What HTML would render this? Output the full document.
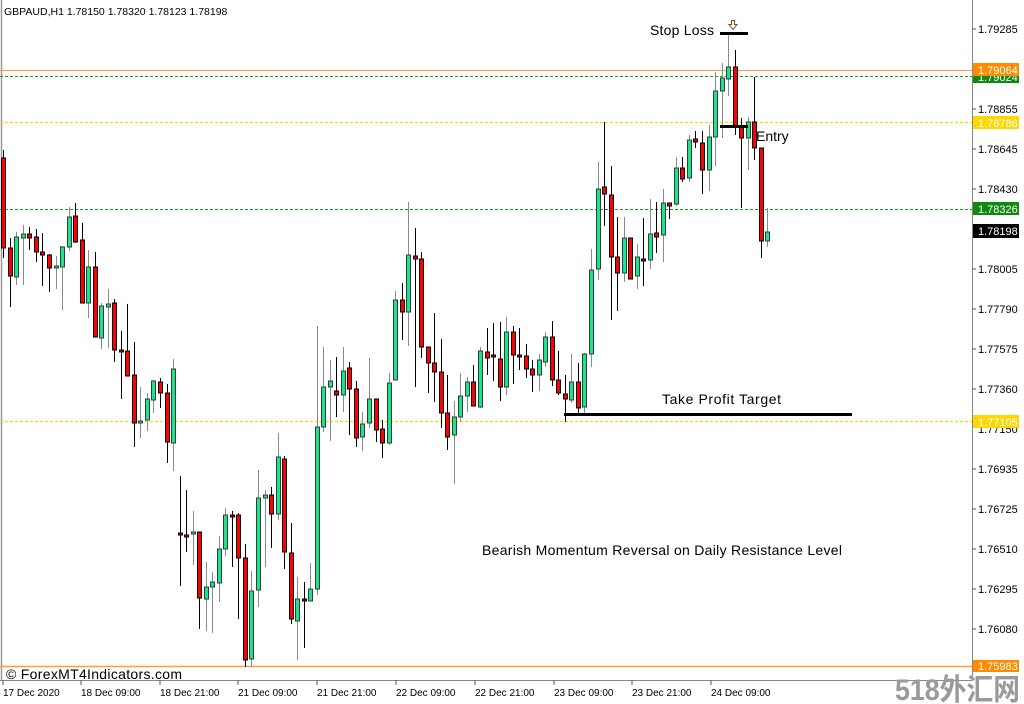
<!DOCTYPE html>
<html><head><meta charset="utf-8"><style>
html,body{margin:0;padding:0;background:#fff;}
body{width:1024px;height:704px;overflow:hidden;position:relative;font-family:"Liberation Sans","Noto Sans CJK SC",sans-serif;}
svg{position:absolute;left:0;top:0;}
</style></head><body>
<svg id="s" width="1024" height="704" xmlns="http://www.w3.org/2000/svg" font-family="Liberation Sans, sans-serif">
<rect x="0" y="0" width="1024" height="704" fill="#fff"/>
<line x1="1.5" y1="0" x2="1.5" y2="680" stroke="#999" stroke-width="1.5"/>
<line x1="972.5" y1="0" x2="972.5" y2="680" stroke="#888" stroke-width="1"/>
<line x1="0" y1="680.5" x2="972" y2="680.5" stroke="#888" stroke-width="1"/>
<line x1="0" y1="70.5" x2="972" y2="70.5" stroke="#ffa040" stroke-width="1"/>
<line x1="0" y1="76.5" x2="972" y2="76.5" stroke="#1a9a1a" stroke-width="1" stroke-dasharray="3,2"/>
<line x1="0" y1="122.5" x2="972" y2="122.5" stroke="#ffd700" stroke-width="1.2" stroke-dasharray="3,2"/>
<line x1="0" y1="209.5" x2="972" y2="209.5" stroke="#1a9a1a" stroke-width="1" stroke-dasharray="3,2"/>
<line x1="0" y1="421.5" x2="972" y2="421.5" stroke="#ffd700" stroke-width="1.2" stroke-dasharray="3,2"/>
<line x1="0" y1="666.5" x2="972" y2="666.5" stroke="#ffa040" stroke-width="1.5"/>
<g id="c"></g>
<g font-size="11" fill="#000">
<text x="978" y="33">1.79285</text>
<text x="978" y="113">1.78855</text>
<text x="978" y="153">1.78645</text>
<text x="978" y="193">1.78430</text>
<text x="978" y="273">1.78005</text>
<text x="978" y="313">1.77790</text>
<text x="978" y="353">1.77575</text>
<text x="978" y="393">1.77360</text>
<text x="978" y="433">1.77150</text>
<text x="978" y="473">1.76935</text>
<text x="978" y="513">1.76725</text>
<text x="978" y="553">1.76510</text>
<text x="978" y="593">1.76295</text>
<text x="978" y="633">1.76080</text>
</g>
<g stroke="#555">
<line x1="972" y1="29" x2="976" y2="29"/><line x1="972" y1="109" x2="976" y2="109"/><line x1="972" y1="149" x2="976" y2="149"/><line x1="972" y1="189" x2="976" y2="189"/><line x1="972" y1="269" x2="976" y2="269"/><line x1="972" y1="309" x2="976" y2="309"/><line x1="972" y1="349" x2="976" y2="349"/><line x1="972" y1="389" x2="976" y2="389"/><line x1="972" y1="469" x2="976" y2="469"/><line x1="972" y1="509" x2="976" y2="509"/><line x1="972" y1="549" x2="976" y2="549"/><line x1="972" y1="589" x2="976" y2="589"/><line x1="972" y1="629" x2="976" y2="629"/>
</g>
<rect x="973" y="71" width="46" height="12" fill="#118811"/><text x="978" y="81" font-size="11" fill="#fff">1.79024</text>
<rect x="973" y="63" width="46" height="13" fill="#ff8c00"/><text x="978" y="74" font-size="11" fill="#fff">1.79064</text>
<rect x="973" y="116" width="46" height="13" fill="#ffd700"/><text x="978" y="127" font-size="11" fill="#fff">1.78786</text>
<rect x="973" y="202" width="46" height="13" fill="#118811"/><text x="978" y="213" font-size="11" fill="#fff">1.78326</text>
<rect x="973" y="224" width="46" height="14" fill="#000"/><text x="978" y="235" font-size="11" fill="#fff">1.78198</text>
<rect x="973" y="415" width="46" height="13" fill="#ffd700"/><text x="978" y="426" font-size="11" fill="#fff">1.77105</text>
<rect x="973" y="660" width="46" height="12" fill="#ff8c00"/><text x="978" y="670" font-size="11" fill="#fff">1.75983</text>
<text x="4" y="15" font-size="10.5" fill="#000">GBPAUD,H1  1.78150 1.78320 1.78123 1.78198</text>
<g font-size="10" fill="#000">
<text x="3" y="696">17 Dec 2020</text><text x="81" y="696">18 Dec 09:00</text><text x="160" y="696">18 Dec 21:00</text><text x="238" y="696">21 Dec 09:00</text><text x="317" y="696">21 Dec 21:00</text><text x="396" y="696">22 Dec 09:00</text><text x="475" y="696">22 Dec 21:00</text><text x="554" y="696">23 Dec 09:00</text><text x="632" y="696">23 Dec 21:00</text><text x="711" y="696">24 Dec 09:00</text>
</g>
<g stroke="#555"><line x1="3" y1="680" x2="3" y2="685"/><line x1="81" y1="680" x2="81" y2="685"/><line x1="160" y1="680" x2="160" y2="685"/><line x1="238" y1="680" x2="238" y2="685"/><line x1="317" y1="680" x2="317" y2="685"/><line x1="396" y1="680" x2="396" y2="685"/><line x1="475" y1="680" x2="475" y2="685"/><line x1="554" y1="680" x2="554" y2="685"/><line x1="632" y1="680" x2="632" y2="685"/><line x1="711" y1="680" x2="711" y2="685"/></g>
<line x1="720" y1="33.5" x2="748" y2="33.5" stroke="#000" stroke-width="3"/>
<path d="M731.5 20.5h3v4h2.5l-4 5-4-5h2.5z" fill="#fff" stroke="#8b4513" stroke-width="1"/>
<text x="650" y="35" font-size="14" fill="#000" textLength="64">Stop Loss</text>
<line x1="720" y1="126.5" x2="748" y2="126.5" stroke="#000" stroke-width="3"/>
<text x="756" y="141" font-size="14" fill="#000">Entry</text>
<line x1="564" y1="414.5" x2="852" y2="414.5" stroke="#000" stroke-width="3"/>
<text x="662" y="404" font-size="14" fill="#000" textLength="119">Take Profit Target</text>
<text x="482" y="555" font-size="14" fill="#000" textLength="360">Bearish Momentum Reversal on Daily Resistance Level</text>
<text x="6" y="679" font-size="14" fill="#000" textLength="176">© ForexMT4Indicators.com</text>
<text x="895" y="700" font-size="30" font-weight="bold" fill="#9a9a9a" textLength="125" lengthAdjust="spacingAndGlyphs" font-family="Liberation Sans, Noto Sans CJK SC, sans-serif">518外汇网</text>
</svg>
<script>
var d=[[158,248,150,258,0],[248,276,238,307,0],[237,277,232,285,1],[234,238,225,285,1],[234,238,227,250,0],[237,252,229,262,0],[252,255,233,286,0],[255,268,254,292,0],[266,268,256,289,1],[247,267,246,310,1],[217,247,207,251,1],[216,242,203,243,0],[240,303,223,303,0],[267,303,250,318,1],[267,337,252,337,0],[306,338,303,349,1],[304,307,289,348,1],[303,350,299,362,0],[350,352,331,399,0],[351,376,304,376,0],[375,423,342,447,0],[421,423,387,438,1],[399,420,393,431,1],[381,400,380,413,1],[382,393,378,408,0],[393,442,384,463,0],[369,443,359,471,1],
[533,535,476,586,0],[535,537,490,552,0],[532,534,511,565,1],[532,598,532,629,0],[587,599,562,631,1],[582,587,572,633,1],[549,583,536,602,1],[515,549,508,556,1],[515,517,511,567,0],[515,558,513,619,0],[558,660,544,667,0],[591,659,571,667,1],[498,590,470,607,1],[495,498,490,567,1],[495,514,487,548,0],[457,514,433,520,1],[459,552,456,569,0],[553,619,523,624,0],[599,621,577,660,1],[599,601,582,648,0],[589,601,563,601,1],[427,589,326,595,1],[387,427,347,432,1],[381,387,360,441,1],[391,395,357,417,0],[371,395,347,412,1],[368,389,362,435,0],[389,438,381,447,0],[424,437,412,451,1],[399,423,358,428,1],[399,430,399,442,0],[429,443,420,458,0],[383,443,373,445,1],[300,380,291,380,1],[300,312,283,340,0],[255,312,202,346,1],[256,259,228,387,0],[259,347,252,358,0],[347,363,347,393,0],[363,372,313,402,0],[372,413,339,428,0],[413,437,375,450,0],[417,435,401,484,1],[396,417,373,422,1],[382,396,377,412,1],[382,406,365,406,0],[351,407,347,408,1],[352,358,328,375,0],[355,357,323,381,0],[359,387,322,401,0],[332,387,317,395,1],[332,355,326,384,0],[355,357,328,370,0],[356,369,344,378,0],[369,375,360,392,0],[360,375,354,391,1],[337,362,332,367,1],[337,380,321,386,0],[380,393,351,395,0],[394,399,375,422,0],[382,400,354,403,1],[382,408,363,416,0],[354,407,353,416,1],[270,354,249,367,1],[189,269,162,280,1],[187,194,122,226,0],[195,257,166,320,0],[257,273,217,311,0],[238,273,217,282,1],[238,279,238,279,0],[257,276,244,289,1],[259,261,218,286,0],[234,260,199,269,1],[233,237,202,253,0],[203,235,189,262,1],[203,206,203,219,0],[168,204,157,206,1],[168,179,157,182,0],[140,178,135,182,1],[139,142,131,148,0],[143,170,131,194,0],[137,170,125,191,1],[91,137,72,166,1],[78,91,63,138,1],[67,79,34,96,1],[67,127,50,135,0],[127,138,118,208,0],[122,138,117,170,1],[122,148,77,160,0],[148,241,148,258,0],[232,241,208,247,1]];
var g=document.getElementById('c'),h='';
for(var i=0;i<d.length;i++){var c=d[i],x=Math.round(3.3+6.53*i)+0.5,gr=c[4];
var wc=gr?'#8a8a8a':'#000';
h+='<line x1="'+x+'" y1="'+c[2]+'" x2="'+x+'" y2="'+c[3]+'" stroke="'+wc+'" stroke-width="1"/>';
var hh=Math.max(1,c[1]-c[0]);
h+='<rect x="'+(x-2)+'" y="'+c[0]+'" width="4" height="'+hh+'" fill="'+(gr?'#19e68a':'#f00')+'" stroke="'+(gr?'#3a3a3a':'#000')+'" stroke-width="1"/>';}
g.innerHTML=h;
</script>
</body></html>
